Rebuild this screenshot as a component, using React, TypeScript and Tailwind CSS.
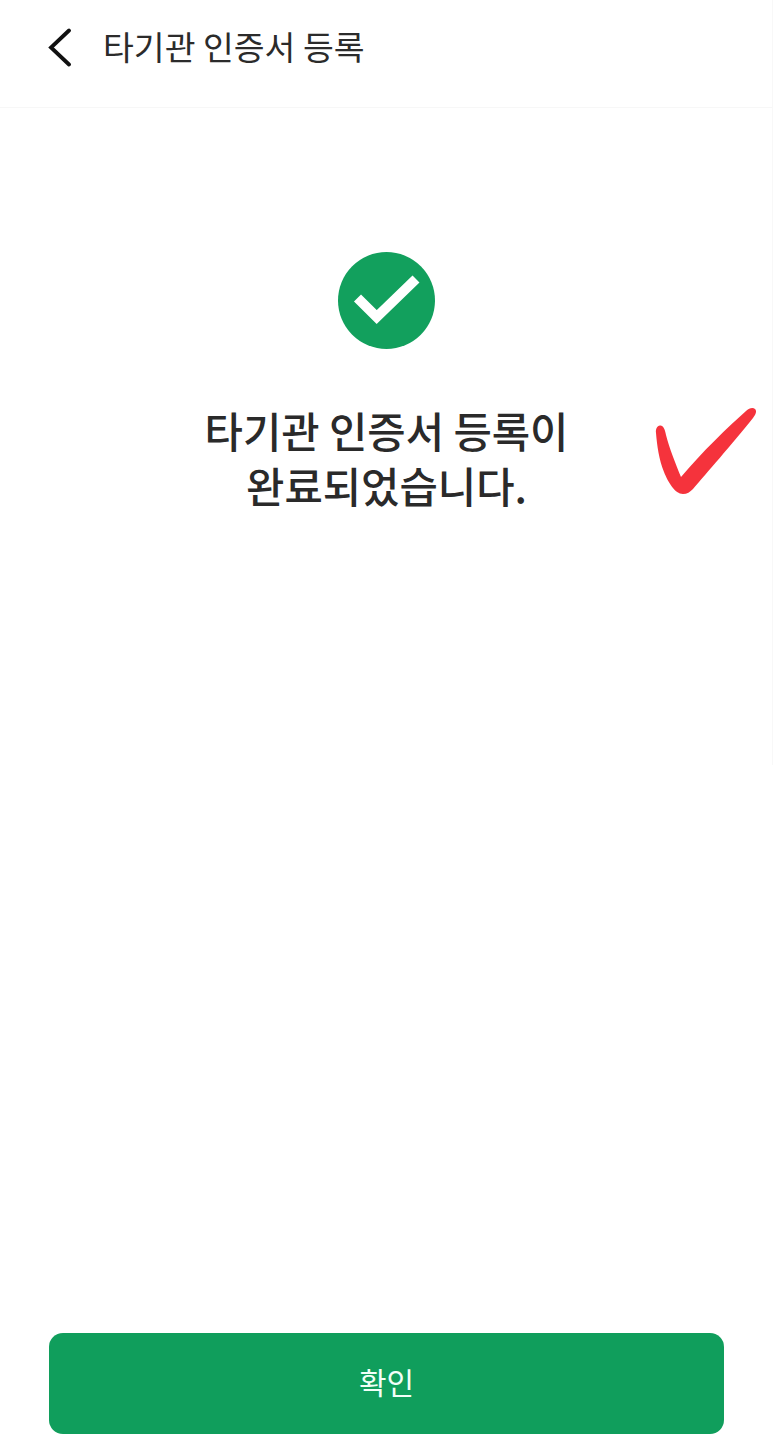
export default function App() {
  return (
    <div className="relative flex h-[1456px] w-[773px] flex-col overflow-hidden bg-white font-['Noto_Sans_CJK_KR','Noto_Sans',sans-serif]">
      <header className="flex h-[108px] shrink-0 items-center gap-[29px] border-b border-[#f7f7f7] pb-[16px] pl-[46px]">
        <svg width="28" height="42" viewBox="0 0 28 42" fill="none" className="shrink-0">
          <path d="M23 5.5L5 22.5L23 39.5" stroke="#111111" strokeWidth="3.8" strokeLinecap="round" />
        </svg>
        <h1 className="text-[33.5px] font-normal leading-[44px] text-[#2b2b2b]">타기관 인증서 등록</h1>
      </header>

      <main className="flex flex-1 flex-col items-center pt-[144px]">
        <div className="flex h-[97px] w-[97px] items-center justify-center rounded-full bg-[#12a05d]">
          <svg width="97" height="97" viewBox="0 0 97 97" fill="none">
            <path d="M19.5 46L38.7 65L78 27" stroke="#ffffff" strokeWidth="10" />
          </svg>
        </div>
        <p className="mt-[54px] text-center text-[41.7px] font-medium leading-[55px] text-[#2a2a2a]">
          타기관 인증서 등록이
          <br />
          완료되었습니다.
        </p>
      </main>

      <div className="shrink-0 px-[49px] pb-[22px]">
        <button className="flex h-[101px] w-[675px] items-center justify-center rounded-[14px] bg-[#109e5c] pb-[4px] text-[30px] font-normal text-[#f2fff8]">
          확인
        </button>
      </div>

      <div className="absolute right-0 top-0 h-[765px] w-px bg-[#f8f8f8]" />

      <svg className="absolute left-[640px] top-[395px]" width="133" height="110" viewBox="0 0 133 110" fill="none">
        <path
          d="M20 30.5C17 31 15.5 34 16 38C17 50 19 65 24 77C28 87 35 99 43 99C47 99 50 97 53 94C66 79 92 49 113 23C116 19 117 16 115 14C113 12 109 13 106 16C88 32 62 57 41 82C36 70 29 52 26 40C25 34 23 30 20 30.5Z"
          fill="#f5333c"
        />
      </svg>
    </div>
  )
}
